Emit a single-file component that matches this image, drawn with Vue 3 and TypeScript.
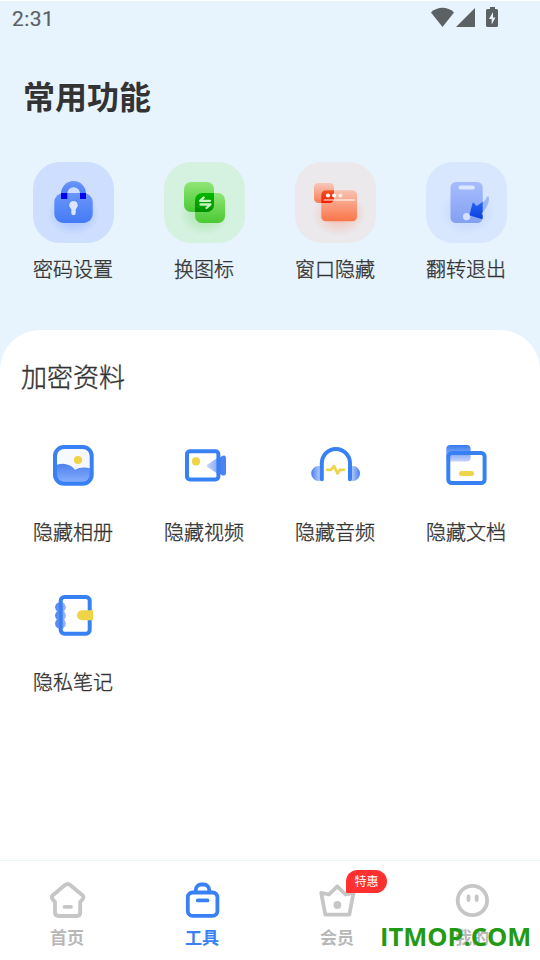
<script setup lang="ts">
interface Item {
  icon: string
  label: string
}

const tools: Item[] = [
  { icon: 'lock', label: '密码设置' },
  { icon: 'swap', label: '换图标' },
  { icon: 'window', label: '窗口隐藏' },
  { icon: 'flip', label: '翻转退出' },
]

const vault: Item[] = [
  { icon: 'album', label: '隐藏相册' },
  { icon: 'video', label: '隐藏视频' },
  { icon: 'audio', label: '隐藏音频' },
  { icon: 'document', label: '隐藏文档' },
  { icon: 'note', label: '隐私笔记' },
]

const tabs: (Item & { active?: boolean; badge?: string })[] = [
  { icon: 'home', label: '首页' },
  { icon: 'toolbox', label: '工具', active: true },
  { icon: 'crown', label: '会员', badge: '特惠' },
  { icon: 'face', label: '我的' },
]
</script>

<template>
  <div class="screen">
    <span class="notch"></span>
    <header class="status">
      <span class="clock">2:31</span>
      <svg class="status-icons" width="72" height="28" viewBox="0 0 72 28" fill="#5c6164">
        <path d="M1 11.500C7.500 5.300 17.500 5.300 24 11.500L12.500 26Z" />
        <path d="M26 26L45 7V26Z" />
        <path d="M60 6h5v2h1.500q1.500 0 1.500 1.500v15q0 1.500-1.500 1.500h-9q-1.500 0-1.500-1.500v-15q0-1.500 1.500-1.500H60Z" />
        <path d="M63 11L59 18h2.700v5.500L65.500 16.500H63Z" fill="#e7f4fe" />
      </svg>
    </header>

    <section class="common">
      <h1>常用功能</h1>
      <div class="grid">
        <div v-for="t in tools" :key="t.icon" class="cell">
          <div class="tile" :class="t.icon">
            <svg v-if="t.icon === 'lock'" viewBox="0 0 81 81">
              <defs>
                <linearGradient id="lockBody" x2="0" y2="1">
                  <stop stop-color="#6b96fa" /><stop offset="1" stop-color="#437af6" />
                </linearGradient>
                <radialGradient id="lockShade">
                  <stop stop-color="#497df5" stop-opacity=".4" /><stop offset="1" stop-color="#497df5" stop-opacity="0" />
                </radialGradient>
              </defs>
              <ellipse cx="40.500" cy="52" rx="26" ry="21" fill="url(#lockShade)" />
              <path d="M28 37v-5.500a12.500 12.500 0 0 1 25 0V37h-6v-5.500a6.350 6.350 0 0 0-12.700 0V37Z" fill="url(#lockBody)" />
              <rect x="21.300" y="31" width="38.400" height="30" rx="9" fill="url(#lockBody)" />
              <path d="M28 31h6.300v6H28zM47 31h6v6h-6z" fill="#0202ee" />
              <circle cx="40.500" cy="43.300" r="4.200" fill="#dce6ff" />
              <path d="M40.500 44v7" stroke="#dce6ff" stroke-width="4.400" stroke-linecap="round" />
            </svg>
            <svg v-else-if="t.icon === 'swap'" viewBox="0 0 81 81">
              <defs>
                <linearGradient id="swapBody" x2="0" y2="1">
                  <stop stop-color="#91e576" /><stop offset="1" stop-color="#49c933" />
                </linearGradient>
                <linearGradient id="swapMid" x2="0" y2="1">
                  <stop stop-color="#00b900" /><stop offset="1" stop-color="#008f00" />
                </linearGradient>
                <radialGradient id="swapShade">
                  <stop stop-color="#49c933" stop-opacity=".36" /><stop offset="1" stop-color="#49c933" stop-opacity="0" />
                </radialGradient>
              </defs>
              <ellipse cx="40.500" cy="52" rx="25" ry="21" fill="url(#swapShade)" />
              <rect x="20" y="20" width="30" height="30" rx="7" fill="url(#swapBody)" />
              <rect x="31" y="31" width="30" height="30" rx="7" fill="url(#swapBody)" />
              <path d="M38 31H50V43a7 7 0 0 1-7 7H31V38a7 7 0 0 1 7-7Z" fill="url(#swapMid)" />
              <path d="M39.700 35.500L36 38.800H46M36.500 42.500H46.500L42.500 46" fill="none" stroke="#c7f5c1" stroke-width="2.300" stroke-linecap="round" stroke-linejoin="round" />
            </svg>
            <svg v-else-if="t.icon === 'window'" viewBox="0 0 81 81">
              <defs>
                <linearGradient id="winBody" x2="0" y2="1">
                  <stop stop-color="#f9c1b1" /><stop offset="1" stop-color="#fa7549" />
                </linearGradient>
                <linearGradient id="winSmall" x2="0" y2="1">
                  <stop stop-color="#f8c7bb" /><stop offset="1" stop-color="#f87c55" />
                </linearGradient>
                <linearGradient id="winMid" x2="0" y2="1">
                  <stop stop-color="#f25525" /><stop offset="1" stop-color="#f01b00" />
                </linearGradient>
                <radialGradient id="winShade">
                  <stop stop-color="#fa7549" stop-opacity=".4" /><stop offset="1" stop-color="#fa7549" stop-opacity="0" />
                </radialGradient>
              </defs>
              <ellipse cx="44" cy="52" rx="27" ry="22" fill="url(#winShade)" />
              <rect x="19" y="21" width="20" height="20" rx="4.500" fill="url(#winSmall)" />
              <rect x="26.300" y="28.300" width="35.700" height="31" rx="4.500" fill="url(#winBody)" />
              <path d="M30.800 28.300H39V36.500a4.500 4.500 0 0 1-4.500 4.500H26.300V32.800a4.500 4.500 0 0 1 4.500-4.500Z" fill="url(#winMid)" />
              <path d="M28.700 38H60" stroke="#fff" stroke-opacity=".5" stroke-width="2" />
              <g fill="#fff"><circle cx="33" cy="33.500" r="2.100" /><circle cx="39.200" cy="33.500" r="2.100" /><circle cx="45.400" cy="33.500" r="2" fill-opacity=".8" /></g>
            </svg>
            <svg v-else viewBox="0 0 81 81">
              <defs>
                <linearGradient id="flipBody" x2="0" y2="1">
                  <stop stop-color="#a6bcfd" /><stop offset="1" stop-color="#83a0f1" />
                </linearGradient>
                <linearGradient id="flipArrow" x2="0" y2="1">
                  <stop stop-color="#2867f5" /><stop offset="1" stop-color="#0841dc" />
                </linearGradient>
                <radialGradient id="flipShade">
                  <stop stop-color="#6f92f5" stop-opacity=".25" /><stop offset="1" stop-color="#6f92f5" stop-opacity="0" />
                </radialGradient>
              </defs>
              <ellipse cx="41" cy="50" rx="28" ry="23" fill="url(#flipShade)" />
              <rect x="24.500" y="20" width="32.200" height="41" rx="5.500" fill="url(#flipBody)" />
              <rect x="32.600" y="23.600" width="16.200" height="3.800" rx="1.900" fill="#dce6ff" />
              <circle cx="40.600" cy="54.600" r="3.700" fill="#d3e0ff" />
              <path d="M56.700 40.500Q60 38 61 34.700Q63.200 32.800 63 38Q61.700 46 55 52Z" fill="#9bb8fb" />
              <path d="M46.500 41q.5-1 1.300 0l2.700 3q3.200-1.500 6.200-4.500V50l-1.200 1.800 1.200 1.500V56q0 1-1 1L44 53.600q-1-.5-.2-1.500Z" fill="url(#flipArrow)" />
            </svg>
          </div>
          <span class="label">{{ t.label }}</span>
        </div>
      </div>
    </section>

    <main class="sheet">
      <h2>加密资料</h2>
      <div class="grid vault">
        <div v-for="v in vault" :key="v.icon" class="cell">
          <svg v-if="v.icon === 'album'" class="glyph" viewBox="0 0 60 60">
            <defs>
              <linearGradient id="hill" x2="0" y2="1">
                <stop stop-color="#4b82f0" /><stop offset="1" stop-color="#8bb0fc" />
              </linearGradient>
            </defs>
            <rect x="12" y="12" width="36.700" height="36.700" rx="9" fill="#f7f9fe" />
            <path d="M12 31C18 27 27 28.500 32 34.700q7-4 16.700-1V40a8.700 8.700 0 0 1-8.700 8.700H21A9 9 0 0 1 12 40Z" fill="url(#hill)" />
            <circle cx="35" cy="25" r="4.100" fill="#f0d447" />
            <rect x="12" y="12" width="36.700" height="36.700" rx="9" class="line" />
          </svg>
          <svg v-else-if="v.icon === 'video'" class="glyph" viewBox="0 0 60 60">
            <defs>
              <linearGradient id="beam"><stop stop-color="#cad5fc" /><stop offset="1" stop-color="#86a8f6" /></linearGradient>
            </defs>
            <path d="M33.500 29.500L44 22.500V39L33.500 32q-1.500-1.200 0-2.500Z" fill="url(#beam)" />
            <path d="M46 22.500l2-1.500q4-1.500 4 2v15q0 3.500-4 2.200l-2-1.200Z" fill="#4c83f0" />
            <circle cx="22" cy="26.400" r="4.100" fill="#f0d447" />
            <rect x="13" y="16.200" width="31.400" height="28.300" rx="3" class="line" />
          </svg>
          <svg v-else-if="v.icon === 'audio'" class="glyph" viewBox="0 0 60 60">
            <defs>
              <linearGradient id="earL"><stop stop-color="#4380f4" /><stop offset="1" stop-color="#b9cbfb" /></linearGradient>
              <linearGradient id="earR"><stop stop-color="#b9cbfb" /><stop offset="1" stop-color="#4380f4" /></linearGradient>
            </defs>
            <path d="M15 31h-1.500a7.300 7.500 0 0 0 0 15H15Z" fill="url(#earL)" />
            <path d="M46.500 31H48a7 7.500 0 0 1 0 15h-1.500Z" fill="url(#earR)" />
            <path d="M16.800 44.200V28.400a14.100 14.500 0 0 1 28.200 0V44.200" class="line" />
            <path d="M22 34.800h4.200L29 31l3.500 7.500 2.500-3.700h4" class="line pulse" />
          </svg>
          <svg v-else-if="v.icon === 'document'" class="glyph" viewBox="0 0 60 60">
            <defs>
              <linearGradient id="folder" x2="0" y2="1"><stop stop-color="#3479ef" /><stop offset="1" stop-color="#c7d3fc" /></linearGradient>
            </defs>
            <rect x="10.300" y="10" width="24.300" height="16.500" rx="4" fill="url(#folder)" />
            <rect x="12.300" y="18" width="36.300" height="30" rx="3.500" class="line" />
            <rect x="23" y="36" width="15" height="5" rx="2.500" fill="#f0d447" />
          </svg>
          <svg v-else class="glyph" viewBox="0 0 60 60">
            <defs>
              <linearGradient id="ring"><stop stop-color="#4b82f1" /><stop offset="1" stop-color="#a2bbf9" /></linearGradient>
            </defs>
            <g fill="url(#ring)"><circle cx="17.500" cy="22.300" r="5.400" /><circle cx="17.500" cy="30.500" r="5.400" /><circle cx="17.500" cy="38.500" r="5.400" /></g>
            <rect x="17.700" y="12" width="29" height="36.700" rx="3.700" class="line" />
            <path d="M50 25.200V35.300H39a5 5.050 0 0 1 0-10.100Z" fill="#f0d447" />
          </svg>
          <span class="label">{{ v.label }}</span>
        </div>
      </div>
    </main>

    <nav class="tabs">
      <div v-for="t in tabs" :key="t.icon" class="tab" :class="{ active: t.active }">
        <svg class="tab-icon" viewBox="0 0 45 45">
          <template v-if="t.icon === 'home'">
            <path d="M20 7L7.500 17.500Q6.200 19 7.300 20.800L10 24V34.500Q10 38 13.500 38H31.700Q35.200 38 35.200 34.500V24L37.900 20.800Q39 19 37.700 17.500L25.200 7Q22.600 4.900 20 7Z" />
            <path d="M19.500 28.900H26" />
          </template>
          <template v-else-if="t.icon === 'toolbox'">
            <rect x="7.800" y="14.500" width="29.600" height="23.400" rx="4.800" />
            <path d="M15.800 14V12a5.500 5.500 0 0 1 5.500-5.500h2.400a5.500 5.500 0 0 1 5.500 5.500v2M17.800 22.400H27.500" />
          </template>
          <template v-else-if="t.icon === 'crown'">
            <path d="M6.200 14.800L14 16.500 22.300 8.300 30.600 16.500 38.500 14.800 34.300 36.700H10.300Z" />
            <circle cx="22.400" cy="27" r="3.900" class="solid" />
          </template>
          <template v-else>
            <circle cx="22.400" cy="22.500" r="14.700" />
            <path d="M18.500 18.500v3.500M26.700 18.500v3.500" />
          </template>
        </svg>
        <span class="tab-label">{{ t.label }}</span>
        <span v-if="t.badge" class="badge">{{ t.badge }}</span>
      </div>
    </nav>
    <div class="watermark">ITMOP.COM</div>
  </div>
</template>

<style>
body {
  margin: 0;
}
</style>

<style scoped>
.screen {
  position: relative;
  box-sizing: border-box;
  width: 540px;
  height: 960px;
  overflow: hidden;
  display: flex;
  flex-direction: column;
  border-top: 1px solid #fff;
  background: #e7f4fe;
  color: #333;
  font-family: "Noto Sans CJK SC", sans-serif;
}
.notch {
  position: absolute;
  top: -1px;
  left: 269px;
  width: 1px;
  height: 1px;
  background: #000;
}
.status {
  height: 36px;
  flex: none;
  display: flex;
  justify-content: space-between;
  padding: 0 38px 0 12px;
}
.clock {
  font: 400 21px/36px Roboto, sans-serif;
  letter-spacing: 0.45px;
  color: #5c6164;
  -webkit-text-stroke: 0.2px #5c6164;
}
.status-icons {
  display: block;
}
.common {
  height: 293px;
  flex: none;
}
h1 {
  margin: 0;
  padding: 34px 23px 2px;
  font-size: 32px;
  line-height: 48px;
  font-weight: 700;
}
.grid {
  display: grid;
  grid-template-columns: repeat(4, 131px);
  padding: 41px 0 0 8px;
}
.cell {
  display: flex;
  flex-direction: column;
  align-items: center;
}
.tile {
  width: 81px;
  height: 81px;
  border-radius: 27px;
  overflow: hidden;
}
.tile svg {
  display: block;
}
.lock { background: #cddefe; }
.swap { background: #d5f1e0; }
.window { background: #ebe9ec; }
.flip { background: #d8e7fe; }
.label {
  margin-top: 11px;
  padding-right: 1px;
  font-size: 20px;
  line-height: 30px;
  font-weight: 300;
  -webkit-text-stroke: 0.35px #333;
}
.sheet {
  flex: 1;
  background: #fff;
  border-radius: 40px 40px 0 0;
}
h2 {
  margin: 0;
  padding: 27px 21px 0;
  font-size: 26px;
  line-height: 38px;
  font-weight: 300;
  -webkit-text-stroke: 0.4px #333;
}
.vault {
  grid-auto-rows: 150px;
  padding-top: 40px;
}
.glyph {
  width: 60px;
  height: 60px;
  margin-right: 1px;
}
.vault .label {
  margin-top: 22px;
}
.line {
  fill: none;
  stroke: #3881f5;
  stroke-width: 4;
  stroke-linecap: round;
  stroke-linejoin: round;
}
.pulse {
  stroke: #f0d447;
  stroke-width: 2.7;
}
.tabs {
  box-sizing: border-box;
  height: 100px;
  flex: none;
  display: grid;
  grid-template-columns: repeat(4, 135px);
  border-top: 1px solid #edf6f8;
  background: #fff;
}
.tab {
  position: relative;
  display: flex;
  flex-direction: column;
  align-items: center;
  padding-top: 17px;
  color: #b8b8b8;
}
.tab-icon {
  width: 45px;
  height: 45px;
  fill: none;
  stroke: #c6c6c6;
  stroke-width: 3.8;
  stroke-linecap: round;
  stroke-linejoin: round;
}
.solid {
  fill: #c6c6c6;
  stroke: none;
}
.tab-label {
  margin-top: 2px;
  padding-right: 1px;
  font-size: 17px;
  line-height: 24px;
  font-weight: 700;
}
.active {
  color: #3881f5;
}
.active .tab-icon {
  stroke: #3881f5;
}
.badge {
  position: absolute;
  left: 76px;
  top: 9px;
  width: 41px;
  height: 23px;
  border-radius: 12px 12px 12px 1px;
  background: #ff3030;
  color: #fff;
  font-size: 12px;
  line-height: 22px;
  text-align: center;
}
.watermark {
  position: absolute;
  left: 380px;
  top: 917px;
  font: 700 25.500px/36px "Open Sans", sans-serif;
  letter-spacing: -0.02px;
  color: #239a14;
  white-space: nowrap;
}
</style>
